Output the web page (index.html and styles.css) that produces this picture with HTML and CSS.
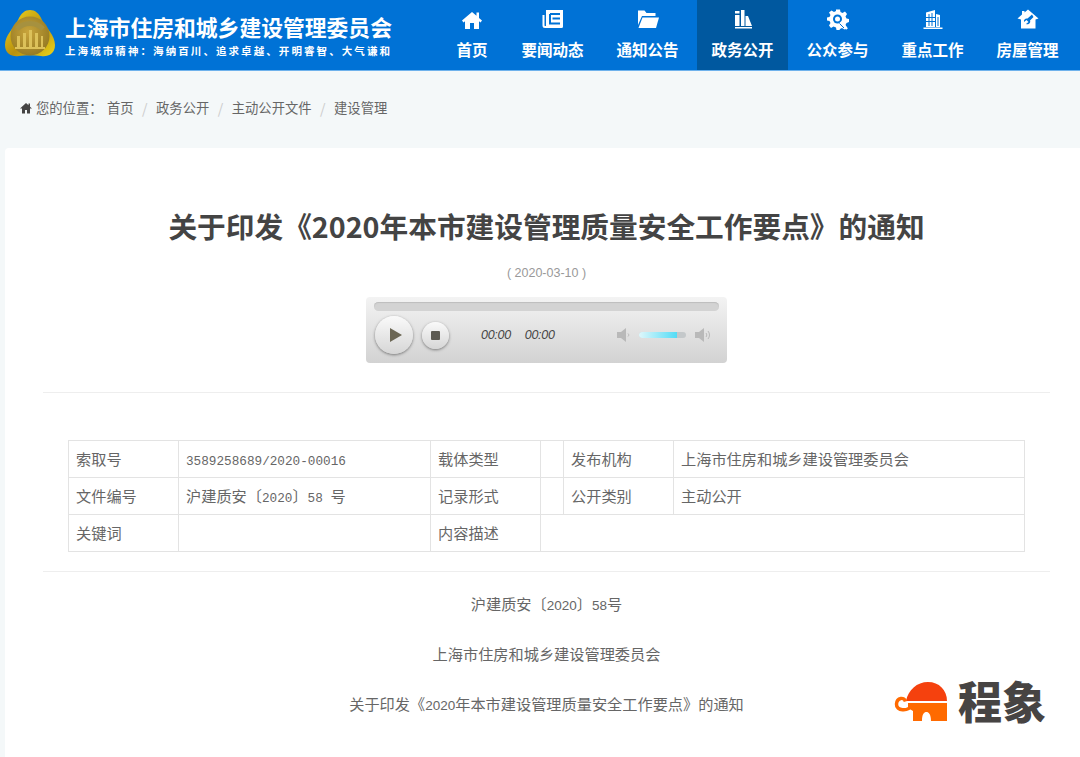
FILE: index.html
```html
<!DOCTYPE html>
<html lang="zh">
<head>
<meta charset="utf-8">
<title>关于印发《2020年本市建设管理质量安全工作要点》的通知</title>
<link rel="stylesheet" href="styles.css">
</head>
<body>
<header class="topbar">
  <div class="brand">
    <svg class="brand-logo" viewBox="0 0 54 50">
      <defs>
        <linearGradient id="gold" x1="0" y1="0" x2="1" y2="1">
          <stop offset="0" stop-color="#f4dc1e"/><stop offset="0.55" stop-color="#b8900f"/><stop offset="1" stop-color="#ecd51a"/>
        </linearGradient>
        <radialGradient id="inner" cx="0.45" cy="0.4" r="0.7">
          <stop offset="0" stop-color="#c9a53c"/><stop offset="1" stop-color="#8e7420"/>
        </radialGradient>
      </defs>
      <path d="M27 1C32 1 36 4 39 11C43 19 52 26 52 36C52 45 45 48 38 47C31 46 23 46 16 47C9 48 2 45 2 36C2 26 11 19 15 11C18 4 22 1 27 1Z" fill="url(#gold)"/>
      <circle cx="27" cy="27" r="19.500" fill="url(#inner)"/>
      <path d="M14 20A18 18 0 0 1 40 20" stroke="#a6913f" stroke-width="5" fill="none"/>
      <path d="M14 38V27H17V38ZM20 38V24H23V38ZM26 38V21H29V38ZM32 38V24H35V38ZM38 38V27H40V38ZM12 38H42V40H12Z" fill="#dcc15a"/>
    </svg>
    <div class="brand-text">
      <div class="brand-name">上海市住房和城乡建设管理委员会</div>
      <div class="brand-motto">上海城市精神&#xFF1A;海纳百川、追求卓越、开明睿智、大气谦和</div>
    </div>
  </div>
  <nav class="mainnav">
    <a class="nav-item nav-first"><svg class="nav-icon" viewBox="0 0 22 22"><path d="M11 3L1 11.500L2.500 13.500L4 12.300V20H9V14H13V20H18V12.300L19.500 13.500L21 11.500L18 9V3.500H15.500V6.800Z" fill="#fff"/></svg>首页</a>
    <a class="nav-item"><svg class="nav-icon" viewBox="0 0 22 22"><path d="M4 1H21V17.500Q21 19 19.500 19H3Q0.500 19 0.500 16.500V6H2.500V16.500Q2.500 17 4 17Z" fill="#fff"/><path d="M8 5V14.500H18M8 5H18M10.500 9.500H18" stroke="#0072d6" stroke-width="2" fill="none"/></svg>要闻动态</a>
    <a class="nav-item"><svg class="nav-icon" viewBox="0 0 22 22"><path d="M1 1.500H7.500L9.500 4H18.500V7H5L1 16Z" fill="#fff"/><path d="M5.500 8.500H22L19 19H1.500Z" fill="#fff"/></svg>通知公告</a>
    <a class="nav-item is-active"><svg class="nav-icon" viewBox="0 0 22 22"><path d="M3 6H7.500V17H3ZM3 2H7.500V4.500H3ZM9 1H12.500V17H9ZM13.500 7H16L20 17H13.500ZM3 18H20V19.500H3Z" fill="#fff"/></svg>政务公开</a>
    <a class="nav-item"><svg class="nav-icon" viewBox="0 0 22 22"><path d="M9 0.500H13L13.500 3L15.500 4L18 2.500L20 5L18.500 7.500L19.500 9.500L22 10V13L19.500 14L18.500 16L20 18.500L17.500 20.500L15 19L13 20L12.500 21H9.500L9 18.500L6.500 17.500L4 19L2 16.500L3.500 14L2.500 12L0 11.500V8.500L2.500 8L3.500 6L2 3.500L4.500 1.500L7 3L9 2Z" fill="#fff"/><circle cx="10.500" cy="10" r="4.500" fill="#0072d6"/><circle cx="10.500" cy="10" r="2.500" fill="#fff"/><path d="M13.500 13L20 20" stroke="#fff" stroke-width="2.500"/><path d="M12.500 14.500L17 19" stroke="#0072d6" stroke-width="1"/></svg>公众参与</a>
    <a class="nav-item"><svg class="nav-icon" viewBox="0 0 22 22"><path d="M4 18V3.500L13 1V18ZM14 5L18 6V18H14ZM1.500 18.500H20.500V20H1.500Z" fill="#fff"/><path d="M7 5V17M10 4V17M4 8.500H13M4 12.500H13M16 8V17" stroke="#0072d6" stroke-width="1"/></svg>重点工作</a>
    <a class="nav-item"><svg class="nav-icon" viewBox="0 0 22 22"><path d="M11 0.500L21.500 9.500L18.500 10.500V19.500H4V10.500L0.500 9.500L5 5.500V2H7.500V3.500Z" fill="#fff"/><path d="M15 5.500L10.500 9.500C8.500 9 6.500 10.500 7 13L9.500 11L11.500 13L9 15C11.500 16 14 14 13 11.500L16.500 8Z" fill="#0072d6"/></svg>房屋管理</a>
  </nav>
</header>

<div class="crumbs">
  <svg class="crumb-home" viewBox="0 0 12 12"><path d="M6 1L0 6.500H2V11.500H5V8H7V11.500H10V6.500H12L10 4.700V1.500H8.500V3.300Z" fill="#444"/></svg>
  <span class="crumb-label">您的位置&#xFF1A;</span>
  <span class="crumb">首页</span><i class="crumb-sep">/</i>
  <span class="crumb">政务公开</span><i class="crumb-sep">/</i>
  <span class="crumb">主动公开文件</span><i class="crumb-sep">/</i>
  <span class="crumb">建设管理</span>
</div>

<main class="card">
  <h1 class="doc-title">关于印发《2020年本市建设管理质量安全工作要点》的通知</h1>
  <p class="doc-date">( 2020-03-10 )</p>

  <div class="player">
    <div class="player-track"></div>
    <div class="player-controls">
      <span class="btn-play"><i class="tri"></i></span>
      <span class="btn-stop"><i class="sq"></i></span>
      <span class="time">00:00</span>
      <span class="time time-second">00:00</span>
      <svg class="vol vol-low" viewBox="0 0 16 16"><path d="M1 5H5L10 1V15L5 11H1Z" fill="#b9b9b9"/><path d="M12 6.500C13 7.500 13 8.500 12 9.500" stroke="#b9b9b9" fill="none"/></svg>
      <span class="vol-bar"><i class="vol-fill"></i></span>
      <svg class="vol vol-high" viewBox="0 0 18 16"><path d="M1 5H5L10 1V15L5 11H1Z" fill="#b9b9b9"/><path d="M12 6C13 7.500 13 8.500 12 10M14 4C16 6.500 16 9.500 14 12" stroke="#b9b9b9" fill="none"/></svg>
    </div>
  </div>

  <hr class="rule rule-top">

  <table class="meta">
    <colgroup>
      <col class="c1"><col class="c2"><col class="c3"><col class="c4"><col class="c5"><col class="c6">
    </colgroup>
    <tr>
      <td>索取号</td><td><span class="mono">3589258689/2020-00016</span></td><td>载体类型</td><td></td><td>发布机构</td><td>上海市住房和城乡建设管理委员会</td>
    </tr>
    <tr>
      <td>文件编号</td><td>沪建质安〔<span class="mono">2020</span>〕<span class="mono">58 </span>号</td><td>记录形式</td><td></td><td>公开类别</td><td>主动公开</td>
    </tr>
    <tr>
      <td>关键词</td><td></td><td>内容描述</td><td colspan="3"></td>
    </tr>
  </table>

  <hr class="rule rule-bottom">

  <div class="doc-body">
    <p>沪建质安〔<span class="num">2020</span>〕<span class="num">58</span>号</p>
    <p>上海市住房和城乡建设管理委员会</p>
    <p>关于印发《<span class="num">2020</span>年本市建设管理质量安全工作要点》的通知</p>
  </div>
</main>

<aside class="watermark">
  <svg class="wm-icon" viewBox="0 0 56 44">
    <path d="M12 21C14 10 23 2 34 2C45 2 53 10 53 21Z" fill="#f5410e"/>
    <path d="M14 23H53V41H37C37 34 34.500 32 32.500 32C30 32 28 34 28 41H19V31L14 28Z" fill="#ff6a00"/>
    <path d="M18 25C14 32 2 31 2.500 24C3 17 10.500 17 11.500 21.500" stroke="#ff6a00" stroke-width="3.500" fill="none"/>
  </svg>
  <span class="wm-text">程象</span>
</aside>
</body>
</html>
```
FILE: styles.css
```css
* { box-sizing: border-box; }
html, body { margin: 0; height: 757px; overflow: hidden; }
body {
  position: relative;
  background: #f4f8f9;
  font-family: "Noto Sans CJK SC", "Noto Sans", sans-serif;
  color: #666;
}
.topbar {
  display: flex;
  align-items: stretch;
  justify-content: space-between;
  height: 71px;
  padding: 0 7px 0 3px;
  background: #0072d6;
  border-bottom: 1px solid #6fb2ec;
  color: #fff;
}
.brand { display: flex; align-items: center; gap: 8px; }
.brand-logo { width: 54px; height: 50px; margin-bottom: 2px; }
.brand-name { font-size: 21.800px; font-weight: 700; line-height: 28px; white-space: nowrap; }
.brand-motto { font-size: 10.500px; font-weight: 700; letter-spacing: 2.080px; line-height: 14px; margin-top: 3px; white-space: nowrap; }
.mainnav { display: flex; gap: 4px; }
.nav-item {
  display: flex;
  flex-direction: column;
  align-items: center;
  width: 91px;
  padding-top: 9px;
  font-size: 15.500px;
  font-weight: 700;
  line-height: 24px;
  color: #fff;
}
.nav-first { width: 62px; }
.nav-icon { width: 22px; height: 22px; margin-bottom: 6px; }
.is-active { background: #00589f; }
.crumbs {
  display: flex;
  align-items: center;
  height: 77px;
  padding: 0 0 4px 20px;
  font-size: 13.300px;
  color: #666;
}
.crumb-home { width: 12px; height: 12px; margin-right: 4px; }
.crumb-label { margin-right: 4.500px; }
.crumb-sep { margin: 0 8.500px; font-style: normal; color: #ccc; font-size: 14px; }
.card {
  width: 1083px;
  margin-left: 5px;
  height: 609px;
  padding-top: 55px;
  border-radius: 4px 0 0 0;
  background: #fff;
}
.doc-title {
  margin: 0;
  text-align: center;
  font-size: 28.700px;
  line-height: 46px;
  font-weight: 700;
  color: #444;
  white-space: nowrap;
}
.doc-date {
  margin: 14px 0 0;
  text-align: center;
  font-family: "Liberation Sans", sans-serif;
  font-size: 12.500px;
  line-height: 20px;
  color: #999;
}
.player {
  width: 361px;
  height: 66px;
  margin: 14px auto 0;
  padding: 5px 8px 0;
  border-radius: 4px;
  background: linear-gradient(#f3f3f3, #d2d2d2);
}
.player-track {
  height: 9px;
  border-radius: 5px;
  background: #d3d3d3;
  box-shadow: inset 0 1px 1px #bdbdbd;
}
.player-controls { display: flex; align-items: center; height: 46px; padding-top: 2px; }
.btn-play, .btn-stop {
  display: flex;
  align-items: center;
  justify-content: center;
  border-radius: 50%;
  background: linear-gradient(#fafafa, #d6d6d6);
  box-shadow: 0 1px 3px #777;
}
.btn-play { width: 38px; height: 38px; margin-left: 1px; }
.btn-stop { width: 27px; height: 27px; margin-left: 9px; }
.tri { border-left: 12px solid #6b6654; border-top: 7px solid transparent; border-bottom: 7px solid transparent; margin-left: 3px; }
.sq { width: 9px; height: 9px; border-radius: 1px; background: #5c5a52; }
.time {
  margin-left: 32px;
  font-family: "Liberation Sans", sans-serif;
  font-style: italic;
  font-size: 12.500px;
  color: #444;
  letter-spacing: -0.300px;
}
.time-second { margin-left: 14px; }
.vol { height: 16px; }
.vol-low { width: 16px; margin-left: 61px; }
.vol-bar { width: 47px; height: 6px; margin-left: 7px; border-radius: 3px; background: #c4c8ca; overflow: hidden; }
.vol-fill { display: block; width: 38px; height: 6px; background: linear-gradient(90deg, #dff7fb, #53dcf6); }
.vol-high { width: 18px; margin-left: 8px; }
.rule { height: 1px; margin: 0 auto; border: 0; background: #eeeeee; width: 1007px; }
.rule-top { margin-top: 29px; }
.rule-bottom { margin-top: 19px; }
.meta {
  width: 956px;
  margin: 47px auto 0;
  border-collapse: collapse;
  table-layout: fixed;
  font-size: 15.200px;
  color: #666;
}
.meta td { height: 37px; padding: 0 7px 3px; border: 1px solid #e3e3e3; white-space: nowrap; }
.c1 { width: 110px; } .c2 { width: 252px; } .c3 { width: 110px; }
.c4 { width: 23px; } .c5 { width: 110px; } .c6 { width: 351px; }
.mono { font-family: "Liberation Mono", monospace; font-size: 12.700px; }
.num { font-family: "Liberation Sans", sans-serif; font-size: 13.500px; }
.doc-body { font-size: 15.200px; color: #666; text-align: center; padding-top: 6px; }
.doc-body p { margin: 0; height: 50px; line-height: 50px; }
.watermark {
  position: absolute;
  left: 894px;
  top: 676px;
  display: flex;
  align-items: flex-start;
  gap: 8px;
}
.wm-icon { width: 56px; height: 44px; margin-top: 4px; }
.wm-text { font-size: 44px; line-height: 48px; font-weight: 900; color: #474443; }
```
